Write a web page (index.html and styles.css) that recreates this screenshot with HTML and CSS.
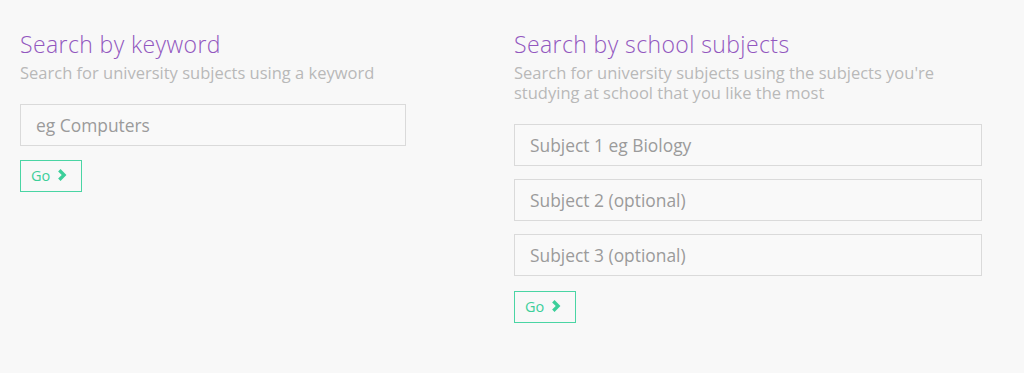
FILE: index.html
```html
<!DOCTYPE html>
<html lang="en">
<head>
<meta charset="utf-8">
<title>Search</title>
<link rel="stylesheet" href="styles.css">
</head>
<body>
<div class="page">
  <section class="col col-left">
    <h2 class="title">Search by keyword</h2>
    <p class="sub">Search for university subjects using a keyword</p>
    <div class="field"><span class="ph">eg Computers</span></div>
    <button class="go" type="button">Go <svg class="chev" viewBox="0 0 8 11" width="9" height="12"><path d="M0 2.3 L2.2 0 L7.6 5.5 L2.2 11 L0 8.7 L3.3 5.5 Z" fill="currentColor"/></svg></button>
  </section>
  <section class="col col-right">
    <h2 class="title">Search by school subjects</h2>
    <p class="sub">Search for university subjects using the subjects you're studying at school that you like the most</p>
    <div class="field"><span class="ph">Subject 1 eg Biology</span></div>
    <div class="field"><span class="ph">Subject 2 (optional)</span></div>
    <div class="field"><span class="ph">Subject 3 (optional)</span></div>
    <button class="go" type="button">Go <svg class="chev" viewBox="0 0 8 11" width="9" height="12"><path d="M0 2.3 L2.2 0 L7.6 5.5 L2.2 11 L0 8.7 L3.3 5.5 Z" fill="currentColor"/></svg></button>
  </section>
</div>
</body>
</html>
```
FILE: styles.css
```css
html, body {
  margin: 0;
  padding: 0;
  background: #f8f8f8;
}
body {
  font-family: "Open Sans", "Noto Sans", sans-serif;
  width: 1024px;
  height: 373px;
  overflow: hidden;
}
.page {
  display: flex;
  padding: 27px 0 0 20px;
}
.col-left {
  width: 494px;
}
.col-right {
  width: 468px;
}
.title {
  margin: 0;
  font-size: 23px;
  font-weight: 300;
  letter-spacing: 0.4px;
  color: #9257bf;
  line-height: 34px;
}
.sub {
  margin: 2px 0 21px;
  font-size: 16.5px;
  font-weight: 400;
  color: #b9b9b9;
  line-height: 20px;
}
.field {
  box-sizing: border-box;
  height: 42px;
  border: 1px solid #dadada;
  background: #f9f9f9;
  display: flex;
  align-items: center;
  padding-left: 15px;
}
.col-left .field { width: 386px; }
.col-right .field + .field { margin-top: 13px; }
.ph {
  font-size: 17.4px;
  color: #9b9b9b;
}
.go {
  display: flex;
  align-items: center;
  gap: 8px;
  box-sizing: border-box;
  width: 62px;
  height: 32px;
  margin-top: 14px;
  padding: 0 0 1px 10px;
  background: transparent;
  border: 1px solid #4ad5a4;
  color: #3ccf9a;
  font-family: "Open Sans", "Noto Sans", sans-serif;
  font-size: 14.5px;
  cursor: pointer;
}
.col-right .go { margin-top: 15px; }
.chev {
  display: block;
  margin-top: -1px;
}
```
